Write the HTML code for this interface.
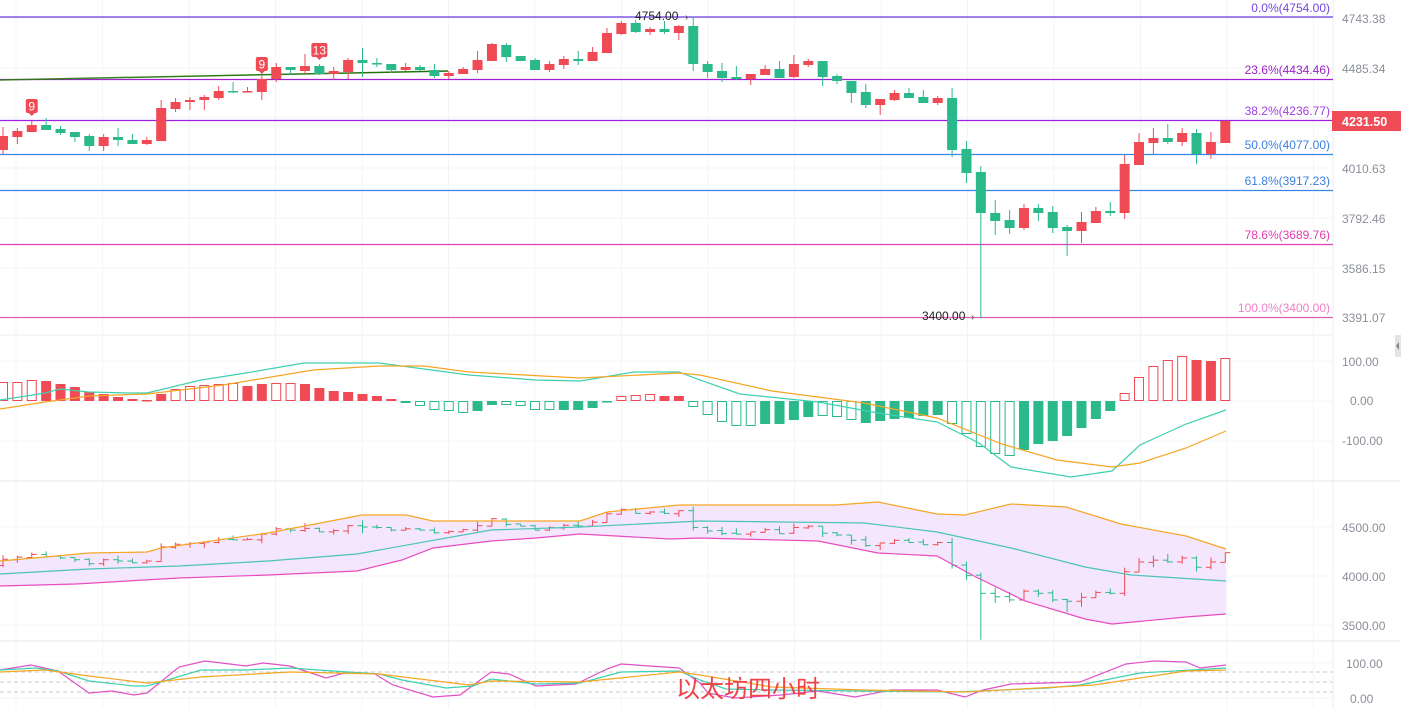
<!DOCTYPE html>
<html><head><meta charset="utf-8"><style>
html,body{margin:0;padding:0;background:#fff;width:1401px;height:709px;overflow:hidden}
svg{display:block}
text{font-family:"Liberation Sans",sans-serif}
.ax{fill:#8a8f98;font-size:12px}
.fb{font-size:12px}
</style></head><body>
<svg id="s" width="1401" height="709" xmlns="http://www.w3.org/2000/svg">
<g id="grid"></g>
<line x1="1333" y1="0" x2="1333" y2="709" stroke="#eceef2"/>
<line x1="0" y1="335" x2="1333" y2="335" stroke="#eceef2"/>
<line x1="0" y1="481" x2="1401" y2="481" stroke="#e6e8ec"/>
<line x1="0" y1="641" x2="1401" y2="641" stroke="#e6e8ec"/>
<defs><linearGradient id="tg" x1="0" x2="1"><stop offset="0" stop-color="#2a7a10" stop-opacity="0.9"/><stop offset="1" stop-color="#1f6e0a"/></linearGradient></defs>
<line x1="0" y1="17" x2="1333" y2="17" stroke="#6a3be0" stroke-width="1.2"/>
<line x1="0" y1="79.5" x2="1333" y2="79.5" stroke="#a020d0" stroke-width="1.2"/>
<line x1="0" y1="80" x2="448" y2="71" stroke="url(#tg)" stroke-width="1.5"/>
<line x1="0" y1="120.5" x2="1333" y2="120.5" stroke="#a020e0" stroke-width="1.2"/>
<line x1="0" y1="154.5" x2="1333" y2="154.5" stroke="#3a86e8" stroke-width="1.2"/>
<line x1="0" y1="190.5" x2="1333" y2="190.5" stroke="#3a86e8" stroke-width="1.2"/>
<line x1="0" y1="244.5" x2="1333" y2="244.5" stroke="#e040c0" stroke-width="1.2"/>
<line x1="0" y1="317.5" x2="1333" y2="317.5" stroke="#e060b0" stroke-width="1.2"/>
<text x="1330" y="12" text-anchor="end" class="fb" fill="#7048e0">0.0%(4754.00)</text>
<text x="1330" y="74" text-anchor="end" class="fb" fill="#9a20c8">23.6%(4434.46)</text>
<text x="1330" y="115" text-anchor="end" class="fb" fill="#a040e0">38.2%(4236.77)</text>
<text x="1330" y="149" text-anchor="end" class="fb" fill="#3d7ee0">50.0%(4077.00)</text>
<text x="1330" y="185" text-anchor="end" class="fb" fill="#3d7ee0">61.8%(3917.23)</text>
<text x="1330" y="239" text-anchor="end" class="fb" fill="#e040b0">78.6%(3689.76)</text>
<text x="1330" y="312" text-anchor="end" class="fb" fill="#f080c8">100.0%(3400.00)</text>
<text x="1342" y="23" class="ax">4743.38</text>
<text x="1342" y="73" class="ax">4485.34</text>
<text x="1342" y="173" class="ax">4010.63</text>
<text x="1342" y="223" class="ax">3792.46</text>
<text x="1342" y="273" class="ax">3586.15</text>
<text x="1342" y="322" class="ax">3391.07</text>
<rect x="1332" y="111" width="69" height="20" fill="#ef4c58"/>
<text x="1342" y="126" fill="#fff" font-size="12.5" font-weight="bold">4231.50</text>
<text x="1342" y="366" class="ax">100.00</text>
<text x="1350" y="405" class="ax">0.00</text>
<text x="1342" y="445" class="ax">-100.00</text>
<text x="1342" y="532" class="ax">4500.00</text>
<text x="1342" y="581" class="ax">4000.00</text>
<text x="1342" y="630" class="ax">3500.00</text>
<text x="1346" y="668" class="ax">100.00</text>
<text x="1350" y="703" class="ax">0.00</text>
<rect x="1395" y="335" width="6" height="22" fill="#e2e4e8"/>
<path d="M1399 342 L1396 346 L1399 350Z" fill="#888"/>
<g id="main"></g>
<text x="635" y="20" font-size="12" fill="#222">4754.00</text><text x="685" y="20" font-size="10" fill="#444">›</text>
<text x="922" y="320" font-size="12" fill="#222">3400.00</text><text x="971" y="320" font-size="10" fill="#444">›</text>
<g id="sig"></g>
<text x="676" y="697" font-size="24" fill="#f04048" style="font-family:'Liberation Sans','Noto Sans CJK SC',sans-serif">以太坊四小时</text>
</svg>
<script>
var NS="http://www.w3.org/2000/svg";
function el(p,n,a){var e=document.createElementNS(NS,n);for(var k in a)e.setAttribute(k,a[k]);document.getElementById(p).appendChild(e);return e;}
var R="#f04a55",G="#2bb98c";
for(var gx=16;gx<1333;gx+=86.5)el("grid","line",{x1:gx,y1:0,x2:gx,y2:709,stroke:"#f3f4f7"});
[18,68,118,168,218,268,318,361,401,441,527,576,625,663,698].forEach(function(y){el("grid","line",{x1:0,y1:y,x2:1333,y2:y,stroke:"#f3f4f7"});});
var C=[[136,150,127,154,'r'],[131,137,128,144,'r'],[125,132,121,132,'r'],[125,130,118,130,'g'],[129,133,126,135,'g'],[132,137,132,142,'g'],[136,146,134,151,'g'],[137,146,134,151,'r'],[137,140,128,146,'g'],[140,144,134,144,'g'],[140,144,137,145,'r'],[108,141,100,141,'r'],[102,109,98,112,'r'],[100,102,97,110,'r'],[97,100,95,110,'r'],[91,98,86,100,'r'],[91,92,82,93,'g'],[91,92,87,92,'r'],[79,92,76,100,'r'],[67,79,63,82,'r'],[67,70,67,75,'g'],[66,71,54,74,'r'],[66,74,64,75,'g'],[71,74,67,80,'r'],[60,72,58,79,'r'],[60,63,48,77,'g'],[63,64,58,67,'g'],[64,70,64,73,'g'],[67,70,63,71,'r'],[67,70,65,71,'g'],[70,76,64,78,'g'],[73,76,71,79,'r'],[69,74,67,74,'r'],[60,70,51,73,'r'],[44,61,43,61,'r'],[45,57,43,62,'g'],[56,61,56,61,'g'],[60,70,58,70,'g'],[64,70,61,72,'r'],[59,65,56,69,'r'],[59,61,51,65,'g'],[52,61,47,61,'r'],[33,53,28,53,'r'],[23,34,21,35,'r'],[23,32,20,33,'g'],[29,32,27,35,'r'],[29,32,21,34,'g'],[26,33,25,40,'r'],[26,64,17,71,'g'],[64,72,61,78,'g'],[71,78,63,82,'g'],[77,79,66,80,'g'],[74,79,74,85,'r'],[69,75,65,75,'r'],[69,78,61,78,'g'],[64,77,55,78,'r'],[61,65,59,67,'r'],[61,77,61,86,'g'],[76,81,74,84,'g'],[81,93,81,103,'g'],[92,105,84,108,'g'],[99,105,99,115,'r'],[93,100,90,101,'r'],[93,98,88,98,'g'],[97,103,90,103,'g'],[98,103,96,105,'r'],[98,150,88,157,'g'],[149,173,141,183,'g'],[172,213,166,318,'g'],[213,221,200,235,'g'],[220,228,210,234,'g'],[208,228,204,230,'r'],[208,213,204,221,'g'],[212,228,206,233,'g'],[227,231,225,256,'g'],[222,231,212,243,'r'],[211,223,207,223,'r'],[211,213,202,216,'g'],[164,213,155,219,'r'],[142,165,133,165,'r'],[138,143,128,154,'r'],[138,142,124,144,'g'],[133,142,128,146,'r'],[133,154,129,164,'g'],[142,154,132,159,'r'],[121,143,121,143,'r']];
function X(i){return 3+14.38*i;}
function toBB(y){var p=4743.38-(y-18)/0.2218;return 531+(4500-p)*0.098;}
C.forEach(function(c,i){var x=X(i),col=c[4]=='r'?R:G;
 el("main","line",{x1:x,y1:c[2],x2:x,y2:c[3],stroke:col,"stroke-width":1});
 el("main","rect",{x:x-5,y:c[0],width:10,height:Math.max(1.5,c[1]-c[0]),fill:col});
 var ht=toBB(c[2]),lo=toBB(c[3]),o=toBB(c[4]=='r'?c[1]:c[0]),cl=toBB(c[4]=='r'?c[0]:c[1]);
 el("main","line",{x1:x,y1:ht,x2:x,y2:Math.max(lo,ht+1),stroke:col});
 el("main","line",{x1:x-5,y1:o,x2:x,y2:o,stroke:col});
 el("main","line",{x1:x,y1:cl,x2:x+5,y2:cl,stroke:col});
});
function mk(x,y,t,w){el("main","rect",{x:x-w/2,y:y,width:w,height:14,rx:2,fill:R});el("main","path",{d:"M"+(x-3)+" "+(y+14)+"L"+x+" "+(y+17)+"L"+(x+3)+" "+(y+14)+"Z",fill:R});var e=el("main","text",{x:x,y:y+11.5,"text-anchor":"middle","font-size":"12",fill:"#fff"});e.textContent=t;}
mk(X(2),99,"9",12);mk(X(18),57,"9",12);mk(X(22),43,"13",16);
var H=[19,19,21,20,17,14,9,7,4,2,1,7,12,15,16,17,18,15,17,18,18,17,13,10,9,7,5,2,-2,-5,-9,-10,-12,-10,-4,-4,-5,-9,-9,-9,-9,-7,-1,5,6,7,5,5,-6,-14,-21,-25,-25,-23,-23,-19,-16,-15,-16,-19,-22,-20,-18,-17,-15,-14,-23,-33,-46,-53,-55,-49,-43,-40,-35,-27,-18,-10,8,24,35,41,45,41,40,43];
var HL={};[0,1,2,12,13,14,15,16,19,20,28,29,30,31,32,35,36,37,38,43,44,45,48,49,50,51,52,57,58,59,66,67,68,69,70,78,79,80,81,82,85].forEach(function(k){HL[k]=1;});
H.forEach(function(h,i){var x=X(i),col=h>=0?R:G,y=h>=0?401-h:401,hh=Math.max(1.5,Math.abs(h));
 if(HL[i])el("main","rect",{x:x-4.5,y:y+0.5,width:9,height:hh-1,fill:"#fff",stroke:col,"stroke-width":1});
 else el("main","rect",{x:x-5,y:y,width:10,height:hh,fill:col});});
function pl(pts,col,w){el("sig","polyline",{points:pts.map(function(p){return p.join(",");}).join(" "),fill:"none",stroke:col,"stroke-width":w||1.2});}
pl([[0,400],[45,393],[60,389],[89,392],[129,393],[147,393],[201,380],[246,373],[304,363],[379,363],[469,375],[536,380],[580,381],[634,372],[679,372],[700,380],[740,394],[818,402],[878,413],[937,422],[979,443],[1011,467],[1071,477],[1112,471],[1140,445],[1186,424],[1226,410]],"#3fd0b0");
pl([[0,409],[45,402],[89,396],[147,394],[223,385],[313,370],[379,366],[424,366],[469,372],[580,378],[679,373],[700,375],[772,391],[864,403],[937,418],[1002,444],[1057,460],[1112,467],[1140,463],[1186,448],[1226,431]],"#f5a623");
var up=[[0,561],[45,557],[89,553],[147,552],[161,548],[268,533],[362,515],[406,515],[433,521],[491,521],[580,521],[607,512],[679,505],[836,505],[878,502],[937,514],[965,515],[1011,504],[1066,507],[1121,524],[1186,536],[1226,549]];
var lw=[[0,586],[76,584],[179,578],[268,575],[357,571],[402,560],[433,548],[491,541],[536,538],[580,534],[670,539],[700,538],[818,541],[878,553],[937,556],[974,576],[1025,601],[1085,619],[1112,624],[1186,617],[1226,614]];
var poly=up.concat(lw.slice().reverse());
el("grid","polygon",{points:poly.map(function(p){return p.join(",");}).join(" "),fill:"#f4e6fc"});
pl(up,"#f5a623");pl(lw,"#e84cc0");
pl([[0,574],[89,569],[179,566],[268,561],[357,554],[491,530],[580,527],[700,521],[864,523],[937,532],[1011,548],[1085,567],[1131,575],[1226,581]],"#4cc4b8");
[672,682,692].forEach(function(y){el("grid","line",{x1:0,y1:y,x2:1333,y2:y,stroke:"#c8c8c8","stroke-dasharray":"4,3"});});
pl([[0,670],[31,665],[58,671],[89,693],[112,691],[134,695],[147,693],[179,667],[205,661],[246,666],[263,663],[290,666],[326,678],[348,672],[375,674],[393,685],[433,697],[460,695],[491,672],[509,674],[536,686],[576,684],[607,669],[621,664],[679,668],[700,683],[708,693],[735,698],[781,695],[818,691],[855,697],[891,690],[937,690],[965,697],[983,690],[1011,684],[1080,682],[1126,664],[1154,661],[1186,662],[1200,668],[1226,665]],"#e050c8");
pl([[0,670],[36,668],[58,671],[89,681],[134,686],[147,686],[201,670],[246,670],[290,668],[348,672],[379,674],[402,680],[446,688],[473,686],[491,679],[536,684],[580,683],[621,672],[679,671],[700,680],[726,689],[772,690],[864,691],[956,692],[1048,688],[1080,685],[1140,673],[1226,668]],"#3fd0b0");
pl([[0,672],[45,670],[89,676],[147,683],[201,677],[290,672],[379,674],[469,685],[491,681],[580,682],[679,672],[700,675],[772,687],[864,690],[965,692],[1094,685],[1186,671],[1226,670]],"#f5a623");
</script>
</body></html>
